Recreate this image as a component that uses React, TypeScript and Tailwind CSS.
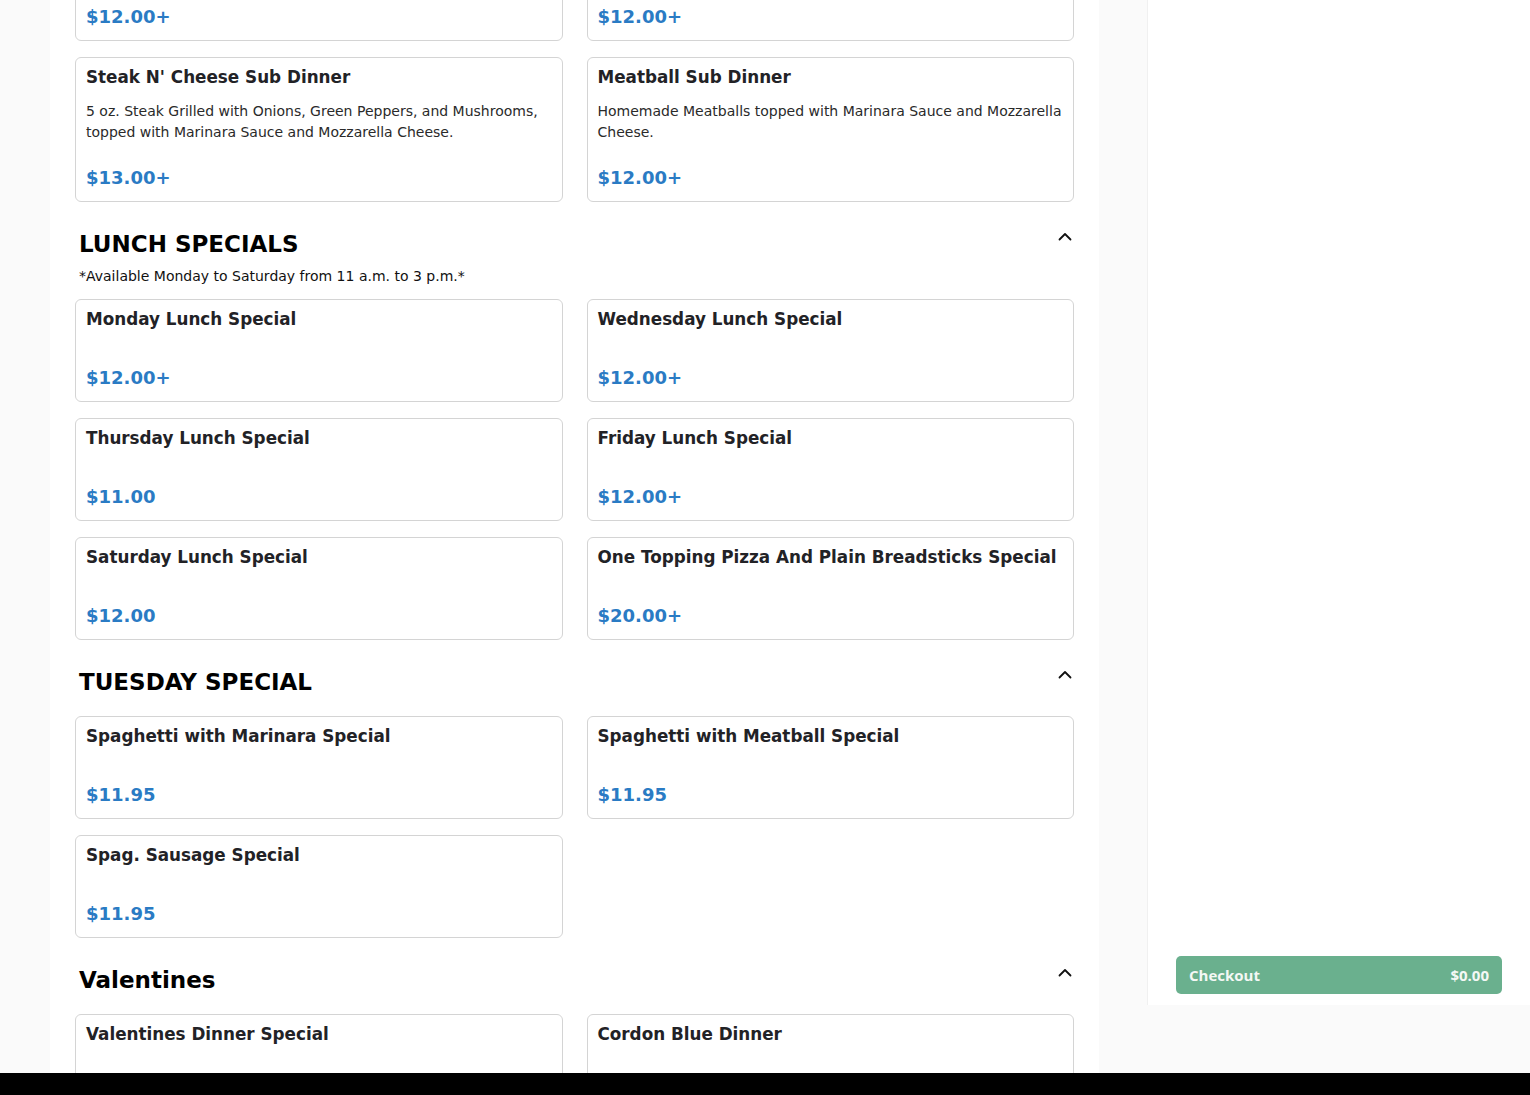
import React from 'react';

type Item = { name: string; desc?: string; price: string };
type Section = { title: string; note?: string; items: Item[] };

const leadRow: Item[] = [
  { name: 'Chicken Parmesan Sub Dinner', price: '$12.00+' },
  { name: 'Sausage Sub Dinner', price: '$12.00+' },
  {
    name: "Steak N' Cheese Sub Dinner",
    desc: '5 oz. Steak Grilled with Onions, Green Peppers, and Mushrooms, topped with Marinara Sauce and Mozzarella Cheese.',
    price: '$13.00+',
  },
  {
    name: 'Meatball Sub Dinner',
    desc: 'Homemade Meatballs topped with Marinara Sauce and Mozzarella Cheese.',
    price: '$12.00+',
  },
];

const sections: Section[] = [
  {
    title: 'LUNCH SPECIALS',
    note: '*Available Monday to Saturday from 11 a.m. to 3 p.m.*',
    items: [
      { name: 'Monday Lunch Special', price: '$12.00+' },
      { name: 'Wednesday Lunch Special', price: '$12.00+' },
      { name: 'Thursday Lunch Special', price: '$11.00' },
      { name: 'Friday Lunch Special', price: '$12.00+' },
      { name: 'Saturday Lunch Special', price: '$12.00' },
      { name: 'One Topping Pizza And Plain Breadsticks Special', price: '$20.00+' },
    ],
  },
  {
    title: 'TUESDAY SPECIAL',
    items: [
      { name: 'Spaghetti with Marinara Special', price: '$11.95' },
      { name: 'Spaghetti with Meatball Special', price: '$11.95' },
      { name: 'Spag. Sausage Special', price: '$11.95' },
    ],
  },
  {
    title: 'Valentines',
    items: [
      { name: 'Valentines Dinner Special', price: '$25.00' },
      { name: 'Cordon Blue Dinner', price: '$18.00' },
    ],
  },
];

function Card({ item }: { item: Item }) {
  return (
    <div className="flex flex-col rounded-md border border-[#d4d4d4] bg-white px-[10px] pt-[9px] pb-[10px]">
      <h3 className="text-[16.8px] leading-[20px] font-bold text-[#222226]">{item.name}</h3>
      <p className="mt-[14px] text-[14px] leading-[21px] text-[#2a2a2a]">{item.desc}</p>
      <div className="mt-[21px] text-[18px] leading-[27px] font-bold text-[#2a7bc4]">{item.price}</div>
    </div>
  );
}

function ChevronUp() {
  return (
    <svg width="16" height="16" viewBox="0 0 16 16" fill="none" className="mt-[-1px]">
      <path d="M2.5 10.5 L8 5 L13.5 10.5" stroke="#111" strokeWidth="1.8" strokeLinecap="round" strokeLinejoin="round" />
    </svg>
  );
}

export default function App() {
  return (
    <div className="flex h-[1095px] flex-col overflow-hidden bg-[#fafafa]" style={{ fontFamily: '"DejaVu Sans", sans-serif' }}>
      <div className="flex h-[1073px] items-start">
        <div className="w-[50px] shrink-0" />
        <main className="h-[1073px] w-[1049px] shrink-0 overflow-hidden bg-white px-[25px]">
          <div className="-mt-[62px] grid grid-cols-2 gap-x-6 gap-y-4">
            {leadRow.map((it) => (
              <Card key={it.name} item={it} />
            ))}
          </div>
          {sections.map((s) => (
            <section key={s.title} className="mt-[28px]">
              <div className="flex items-start justify-between pl-1 pr-[1px]">
                <h2 className="text-[23px] leading-[28px] font-bold text-black">{s.title}</h2>
                <ChevronUp />
              </div>
              {s.note ? (
                <p className="mt-2 mb-[13px] pl-1 text-[14px] leading-[20px] text-[#111]">{s.note}</p>
              ) : (
                <div className="h-[20px]" />
              )}
              <div className="grid grid-cols-2 gap-x-6 gap-y-4">
                {s.items.map((it) => (
                  <Card key={it.name} item={it} />
                ))}
              </div>
            </section>
          ))}
        </main>
        <div className="w-[48px] shrink-0" />
        <aside className="flex h-[1005px] w-[383px] shrink-0 flex-col justify-end border-l border-[#f0f0f0] bg-white px-[28px] pb-[11px]">
          <button
            className="flex h-[38px] w-full items-center justify-between rounded-[5px] bg-[#6ab08e] px-[13px] text-[15px] font-bold text-[#f4f8f5]"
            style={{ fontFamily: '"Open Sans", sans-serif' }}
          >
            <span>Checkout</span>
            <span>$0.00</span>
          </button>
        </aside>
      </div>
      <div className="h-[22px] bg-black" />
    </div>
  );
}
